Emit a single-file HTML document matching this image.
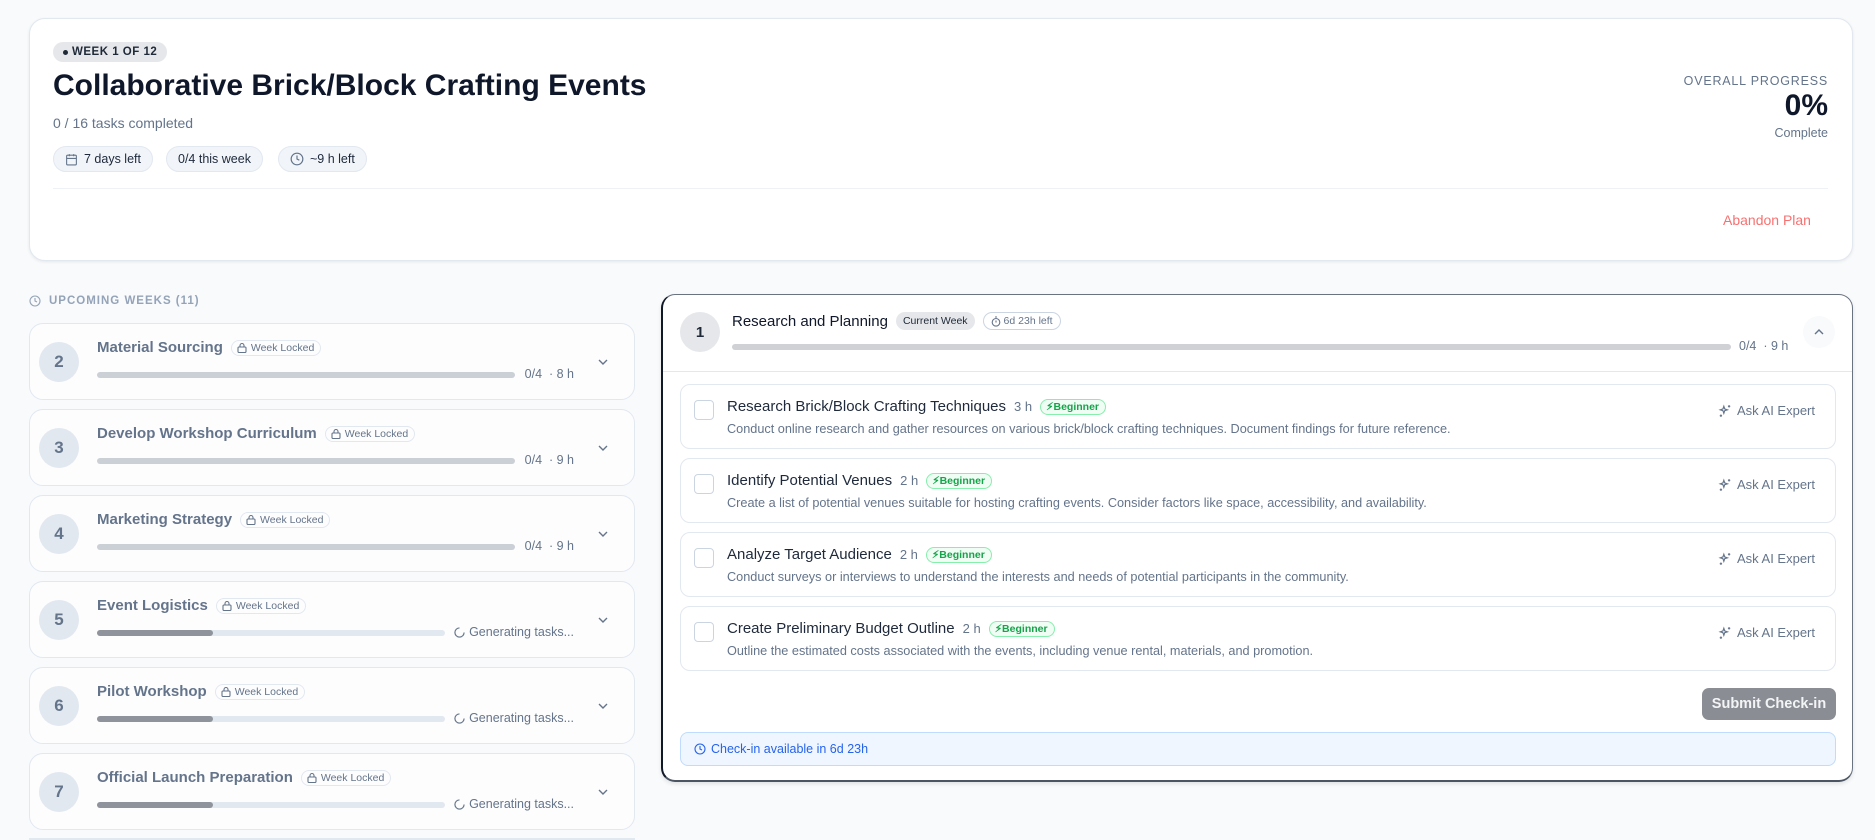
<!DOCTYPE html>
<html style="width:1875px;height:840px;overflow:hidden"><head><meta charset="utf-8"><style>
*{box-sizing:border-box;margin:0;padding:0}
body{width:1875px;height:840px;overflow:hidden;background:#f8fafc;font-family:"Liberation Sans",sans-serif;color:#0f172a;position:relative}
.a{position:absolute}
.card{position:absolute;background:#fff;border:1px solid #e2e8f0;border-radius:16px}
.chip{position:absolute;top:146px;height:26px;border:1px solid #e2e8f0;background:#f1f5f9;border-radius:13px;font-size:12.5px;display:flex;align-items:center;gap:6px;padding:0 11px;color:#1e293b}
.wk{position:absolute;left:29px;width:606px;height:77px;background:#fdfdfe;border:1px solid #e2e8f0;border-radius:14px}
.wk .c{position:absolute;left:9px;top:18px;width:40px;height:40px;border-radius:50%;background:#e2e8f0;color:#64748b;font-weight:bold;font-size:17px;display:flex;align-items:center;justify-content:center}
.wk .t{position:absolute;left:67px;top:15px;font-size:15px;font-weight:bold;color:#64748b;display:flex;align-items:center;gap:8px;white-space:nowrap}
.lock{font-size:10.5px;font-weight:normal;border:1px solid #e2e8f0;border-radius:10px;padding:1px 6px 1px 5px;color:#64748b;display:flex;align-items:center;gap:4px}
.wk .bar{position:absolute;left:67px;top:48px;width:418px;height:6px;border-radius:3px;background:#cbd0d6}
.wk .bar2{position:absolute;left:67px;top:48px;width:348px;height:6px;border-radius:3px;background:#e2e8f0}
.wk .bar2 i{position:absolute;left:0;top:0;width:116px;height:6px;border-radius:3px;background:#8f949c}
.wk .m{position:absolute;right:60px;top:43px;font-size:12.5px;color:#64748b;white-space:nowrap;display:flex;align-items:center;gap:4px}
.wk .ch{position:absolute;left:567px;top:32px}
.task{position:absolute;left:680px;width:1156px;height:65px;background:#fff;border:1px solid #e2e8f0;border-radius:10px}
.task .cb{position:absolute;left:13px;top:15px;width:20px;height:20px;border:1px solid #cbd5e1;border-radius:4px}
.task .tt{position:absolute;left:46px;top:13px;font-size:15px;color:#1e293b;display:flex;align-items:center;gap:8px;white-space:nowrap}
.task .tt .h{font-size:13px;color:#64748b}
.beg{font-size:10.5px;font-weight:bold;color:#16a34a;border:1px solid #86efac;background:#f0fdf4;border-radius:9px;padding:1px 6px 1px 5px;display:flex;align-items:center;gap:2px}
.task .d{position:absolute;left:46px;top:37px;font-size:12.7px;color:#64748b;white-space:nowrap}
.task .ai{position:absolute;right:20px;top:18px;font-size:13px;color:#64748b;display:flex;align-items:center;gap:5px}
</style></head><body>

<div class="card" style="left:29px;top:18px;width:1824px;height:243px;box-shadow:0 1px 3px rgba(0,0,0,.08)"></div>
<div class="a" style="left:53px;top:42px;height:20px;padding:0 10px;background:#e5e7eb;border-radius:10px;font-size:11.5px;font-weight:bold;color:#1f2937;display:flex;align-items:center;gap:4px;letter-spacing:.5px"><span style="width:5px;height:5px;background:#1f2937;border-radius:50%"></span>WEEK 1 OF 12</div>
<div class="a" style="left:53px;top:69px;font-size:30px;font-weight:bold;color:#0f172a">Collaborative Brick/Block Crafting Events</div>
<div class="a" style="left:53px;top:115px;font-size:14px;color:#64748b">0 / 16 tasks completed</div>
<div class="chip" style="left:53px"><svg width="13" height="13" viewBox="0 0 24 24" fill="none" stroke="#64748b" stroke-width="2"><rect x="3" y="4" width="18" height="18" rx="2"/><path d="M16 2v4M8 2v4M3 10h18"/></svg>7 days left</div>
<div class="chip" style="left:166px">0/4 this week</div>
<div class="chip" style="left:278px"><svg width="14" height="14" viewBox="0 0 24 24" fill="none" stroke="#64748b" stroke-width="2"><circle cx="12" cy="12" r="10"/><path d="M12 6v6l4 2"/></svg>~9 h left</div>
<div class="a" style="left:53px;top:188px;width:1775px;height:1px;background:#eef1f5"></div>
<div class="a" style="right:47px;top:74px;font-size:12.5px;color:#64748b;letter-spacing:.8px;text-align:right">OVERALL PROGRESS</div>
<div class="a" style="right:47px;top:89px;font-size:30px;font-weight:bold;color:#0f172a">0%</div>
<div class="a" style="right:47px;top:126px;font-size:12.5px;color:#64748b">Complete</div>
<div class="a" style="left:1723px;top:212px;font-size:14px;color:#f87171">Abandon Plan</div>

<div class="a" style="left:29px;top:295px;font-size:11.5px;font-weight:bold;color:#94a3b8;letter-spacing:1px;display:flex;align-items:center;gap:8px"><svg width="12" height="12" viewBox="0 0 24 24" fill="none" stroke="#94a3b8" stroke-width="2.2"><circle cx="12" cy="12" r="10"/><path d="M12 6v6l4 2"/></svg>UPCOMING WEEKS (11)</div>

<div class="wk" style="top:323px"><div class="c">2</div><div class="t">Material Sourcing<span class="lock"><svg width="10" height="11" viewBox="0 0 10 11" fill="none" stroke="#64748b" stroke-width="1.1"><rect x="1" y="5" width="8" height="5.5" rx="1"/><path d="M3 5V3.5a2 2 0 014 0V5"/></svg>Week Locked</span></div><div class="bar"></div><div class="m">0/4 &nbsp;· 8 h</div><svg class="ch" width="12" height="12" viewBox="0 0 12 12" fill="none" stroke="#64748b" stroke-width="1.4"><path d="M2 4l4 4 4-4"/></svg></div>
<div class="wk" style="top:409px"><div class="c">3</div><div class="t">Develop Workshop Curriculum<span class="lock"><svg width="10" height="11" viewBox="0 0 10 11" fill="none" stroke="#64748b" stroke-width="1.1"><rect x="1" y="5" width="8" height="5.5" rx="1"/><path d="M3 5V3.5a2 2 0 014 0V5"/></svg>Week Locked</span></div><div class="bar"></div><div class="m">0/4 &nbsp;· 9 h</div><svg class="ch" width="12" height="12" viewBox="0 0 12 12" fill="none" stroke="#64748b" stroke-width="1.4"><path d="M2 4l4 4 4-4"/></svg></div>
<div class="wk" style="top:495px"><div class="c">4</div><div class="t">Marketing Strategy<span class="lock"><svg width="10" height="11" viewBox="0 0 10 11" fill="none" stroke="#64748b" stroke-width="1.1"><rect x="1" y="5" width="8" height="5.5" rx="1"/><path d="M3 5V3.5a2 2 0 014 0V5"/></svg>Week Locked</span></div><div class="bar"></div><div class="m">0/4 &nbsp;· 9 h</div><svg class="ch" width="12" height="12" viewBox="0 0 12 12" fill="none" stroke="#64748b" stroke-width="1.4"><path d="M2 4l4 4 4-4"/></svg></div>
<div class="wk" style="top:581px"><div class="c">5</div><div class="t">Event Logistics<span class="lock"><svg width="10" height="11" viewBox="0 0 10 11" fill="none" stroke="#64748b" stroke-width="1.1"><rect x="1" y="5" width="8" height="5.5" rx="1"/><path d="M3 5V3.5a2 2 0 014 0V5"/></svg>Week Locked</span></div><div class="bar2"><i></i></div><div class="m"><svg width="11" height="11" viewBox="0 0 12 12" fill="none" stroke="#64748b" stroke-width="1.3"><path d="M6 1a5 5 0 105 5"/></svg>Generating tasks...</div><svg class="ch" width="12" height="12" viewBox="0 0 12 12" fill="none" stroke="#64748b" stroke-width="1.4"><path d="M2 4l4 4 4-4"/></svg></div>
<div class="wk" style="top:667px"><div class="c">6</div><div class="t">Pilot Workshop<span class="lock"><svg width="10" height="11" viewBox="0 0 10 11" fill="none" stroke="#64748b" stroke-width="1.1"><rect x="1" y="5" width="8" height="5.5" rx="1"/><path d="M3 5V3.5a2 2 0 014 0V5"/></svg>Week Locked</span></div><div class="bar2"><i></i></div><div class="m"><svg width="11" height="11" viewBox="0 0 12 12" fill="none" stroke="#64748b" stroke-width="1.3"><path d="M6 1a5 5 0 105 5"/></svg>Generating tasks...</div><svg class="ch" width="12" height="12" viewBox="0 0 12 12" fill="none" stroke="#64748b" stroke-width="1.4"><path d="M2 4l4 4 4-4"/></svg></div>
<div class="wk" style="top:753px"><div class="c">7</div><div class="t">Official Launch Preparation<span class="lock"><svg width="10" height="11" viewBox="0 0 10 11" fill="none" stroke="#64748b" stroke-width="1.1"><rect x="1" y="5" width="8" height="5.5" rx="1"/><path d="M3 5V3.5a2 2 0 014 0V5"/></svg>Week Locked</span></div><div class="bar2"><i></i></div><div class="m"><svg width="11" height="11" viewBox="0 0 12 12" fill="none" stroke="#64748b" stroke-width="1.3"><path d="M6 1a5 5 0 105 5"/></svg>Generating tasks...</div><svg class="ch" width="12" height="12" viewBox="0 0 12 12" fill="none" stroke="#64748b" stroke-width="1.4"><path d="M2 4l4 4 4-4"/></svg></div>
<div class="a" style="left:29px;top:838px;width:606px;height:2px;background:#e2e8f0"></div>

<div class="a" style="left:661px;top:294px;width:1192px;height:488px;background:#fff;border:1px solid #6b7280;border-left:2px solid #111827;border-bottom:2px solid #4b5563;border-radius:14px;box-shadow:0 2px 4px rgba(0,0,0,.1)"></div>
<div class="a" style="left:680px;top:312px;width:40px;height:40px;border-radius:50%;background:#e5e7eb;font-size:15px;font-weight:bold;color:#1f2937;display:flex;align-items:center;justify-content:center">1</div>
<div class="a" style="left:732px;top:312px;display:flex;align-items:center;gap:8px;white-space:nowrap"><span style="font-size:15px;color:#0f172a">Research and Planning</span><span style="font-size:10.5px;background:#e5e7eb;border-radius:9px;padding:3px 7px;color:#1f2937">Current Week</span><span style="font-size:10.5px;border:1px solid #cbd5e1;border-radius:9px;padding:2px 7px;color:#64748b;display:flex;align-items:center;gap:3px"><svg width="10" height="11" viewBox="0 0 10 11" fill="none" stroke="#64748b" stroke-width="1.1"><circle cx="5" cy="6.3" r="3.8"/><path d="M5 4.5v2M4 1h2"/></svg>6d 23h left</span></div>
<div class="a" style="left:732px;top:344px;width:999px;height:6px;border-radius:3px;background:#cfd1d5"></div>
<div class="a" style="left:1739px;top:339px;font-size:12.5px;color:#64748b;white-space:nowrap">0/4 &nbsp;· 9 h</div>
<div class="a" style="left:1803px;top:316px;width:32px;height:32px;border-radius:50%;background:#f8fafc;display:flex;align-items:center;justify-content:center"><svg width="12" height="12" viewBox="0 0 12 12" fill="none" stroke="#64748b" stroke-width="1.4"><path d="M2 8l4-4 4 4"/></svg></div>
<div class="a" style="left:663px;top:371px;width:1189px;height:1px;background:#e5e7eb"></div>

<div class="task" style="top:384px"><div class="cb"></div><div class="tt">Research Brick/Block Crafting Techniques<span class="h">3 h</span><span class="beg">⚡︎Beginner</span></div><div class="d">Conduct online research and gather resources on various brick/block crafting techniques. Document findings for future reference.</div><div class="ai"><svg width="14" height="14" viewBox="0 0 24 24" fill="none" stroke="#64748b" stroke-width="2"><path d="M10 4l1.5 4.5L16 10l-4.5 1.5L10 16l-1.5-4.5L4 10l4.5-1.5z"/><path d="M19 2v4M17 4h4M5 18v4M3 20h4"/></svg>Ask AI Expert</div></div>
<div class="task" style="top:458px"><div class="cb"></div><div class="tt">Identify Potential Venues<span class="h">2 h</span><span class="beg">⚡︎Beginner</span></div><div class="d">Create a list of potential venues suitable for hosting crafting events. Consider factors like space, accessibility, and availability.</div><div class="ai"><svg width="14" height="14" viewBox="0 0 24 24" fill="none" stroke="#64748b" stroke-width="2"><path d="M10 4l1.5 4.5L16 10l-4.5 1.5L10 16l-1.5-4.5L4 10l4.5-1.5z"/><path d="M19 2v4M17 4h4M5 18v4M3 20h4"/></svg>Ask AI Expert</div></div>
<div class="task" style="top:532px"><div class="cb"></div><div class="tt">Analyze Target Audience<span class="h">2 h</span><span class="beg">⚡︎Beginner</span></div><div class="d">Conduct surveys or interviews to understand the interests and needs of potential participants in the community.</div><div class="ai"><svg width="14" height="14" viewBox="0 0 24 24" fill="none" stroke="#64748b" stroke-width="2"><path d="M10 4l1.5 4.5L16 10l-4.5 1.5L10 16l-1.5-4.5L4 10l4.5-1.5z"/><path d="M19 2v4M17 4h4M5 18v4M3 20h4"/></svg>Ask AI Expert</div></div>
<div class="task" style="top:606px"><div class="cb"></div><div class="tt">Create Preliminary Budget Outline<span class="h">2 h</span><span class="beg">⚡︎Beginner</span></div><div class="d">Outline the estimated costs associated with the events, including venue rental, materials, and promotion.</div><div class="ai"><svg width="14" height="14" viewBox="0 0 24 24" fill="none" stroke="#64748b" stroke-width="2"><path d="M10 4l1.5 4.5L16 10l-4.5 1.5L10 16l-1.5-4.5L4 10l4.5-1.5z"/><path d="M19 2v4M17 4h4M5 18v4M3 20h4"/></svg>Ask AI Expert</div></div>

<div class="a" style="left:1702px;top:688px;width:134px;height:32px;border-radius:7px;background:#8a8d93;color:#f3f4f6;font-size:14.5px;font-weight:bold;display:flex;align-items:center;justify-content:center">Submit Check-in</div>
<div class="a" style="left:680px;top:732px;width:1156px;height:34px;border-radius:8px;background:#eff6ff;border:1px solid #bfdbfe;color:#2563eb;font-size:12.5px;display:flex;align-items:center;gap:5px;padding-left:13px"><svg width="12" height="12" viewBox="0 0 24 24" fill="none" stroke="#2563eb" stroke-width="2.2"><circle cx="12" cy="12" r="10"/><path d="M12 6v6l4 2"/></svg>Check-in available in 6d 23h</div>
</body></html>
